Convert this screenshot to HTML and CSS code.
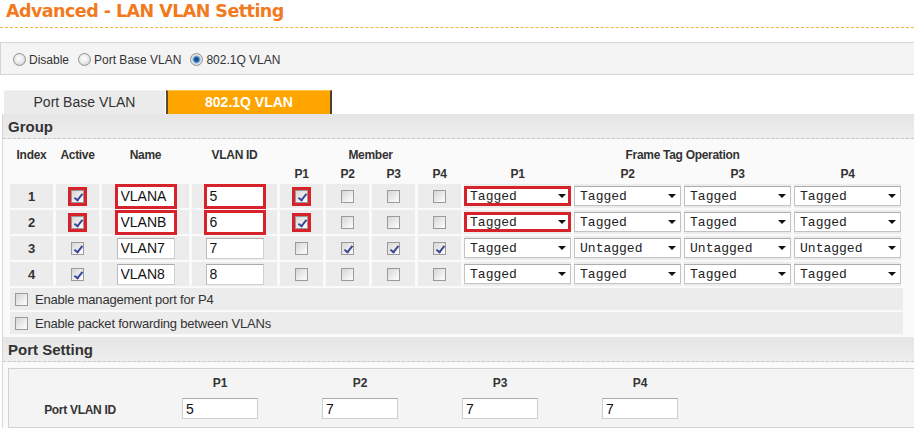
FILE: index.html
```html
<!DOCTYPE html>
<html>
<head>
<meta charset="utf-8">
<title>Advanced - LAN VLAN Setting</title>
<link rel="stylesheet" href="styles.css">
</head>
<body>
<div class="page">
  <h1 class="title">Advanced - LAN VLAN Setting</h1>

  <div class="mode-bar">
    <label class="radio-item"><input type="radio" class="rd" name="mode"><span>Disable</span></label>
    <label class="radio-item"><input type="radio" class="rd" name="mode"><span>Port Base VLAN</span></label>
    <label class="radio-item"><input type="radio" class="rd" name="mode" checked><span>802.1Q VLAN</span></label>
  </div>

  <div class="tabs">
    <div class="tab">Port Base VLAN</div>
    <div class="tab active">802.1Q VLAN</div>
  </div>

  <div class="panel">
    <div class="section-head">Group</div>
    <div class="group-body">
      <table class="grp">
        <colgroup>
          <col class="c-idx"><col class="c-act"><col class="c-name"><col class="c-vid">
          <col class="c-m"><col class="c-m"><col class="c-m"><col class="c-m">
          <col class="c-f"><col class="c-f"><col class="c-f"><col class="c-f">
        </colgroup>
        <thead>
          <tr class="h1">
            <th>Index</th><th>Active</th><th>Name</th><th>VLAN ID</th>
            <th colspan="4">Member</th>
            <th colspan="4">Frame Tag Operation</th>
          </tr>
          <tr class="h2">
            <th></th><th></th><th></th><th></th>
            <th>P1</th><th>P2</th><th>P3</th><th>P4</th>
            <th>P1</th><th>P2</th><th>P3</th><th>P4</th>
          </tr>
        </thead>
        <tbody>
          <tr>
            <td class="idx">1</td>
            <td><input type="checkbox" class="cb hl" checked></td>
            <td><input type="text" class="txt hl" value="VLANA"></td>
            <td><input type="text" class="txt hl" value="5"></td>
            <td><input type="checkbox" class="cb hl" checked></td>
            <td><input type="checkbox" class="cb"></td>
            <td><input type="checkbox" class="cb"></td>
            <td><input type="checkbox" class="cb"></td>
            <td><span class="sel hl"><select><option>Tagged</option><option>Untagged</option></select></span></td>
            <td><span class="sel"><select><option>Tagged</option><option>Untagged</option></select></span></td>
            <td><span class="sel"><select><option>Tagged</option><option>Untagged</option></select></span></td>
            <td><span class="sel"><select><option>Tagged</option><option>Untagged</option></select></span></td>
          </tr>
          <tr>
            <td class="idx">2</td>
            <td><input type="checkbox" class="cb hl" checked></td>
            <td><input type="text" class="txt hl" value="VLANB"></td>
            <td><input type="text" class="txt hl" value="6"></td>
            <td><input type="checkbox" class="cb hl" checked></td>
            <td><input type="checkbox" class="cb"></td>
            <td><input type="checkbox" class="cb"></td>
            <td><input type="checkbox" class="cb"></td>
            <td><span class="sel hl"><select><option>Tagged</option><option>Untagged</option></select></span></td>
            <td><span class="sel"><select><option>Tagged</option><option>Untagged</option></select></span></td>
            <td><span class="sel"><select><option>Tagged</option><option>Untagged</option></select></span></td>
            <td><span class="sel"><select><option>Tagged</option><option>Untagged</option></select></span></td>
          </tr>
          <tr>
            <td class="idx">3</td>
            <td><input type="checkbox" class="cb" checked></td>
            <td><input type="text" class="txt" value="VLAN7"></td>
            <td><input type="text" class="txt" value="7"></td>
            <td><input type="checkbox" class="cb"></td>
            <td><input type="checkbox" class="cb" checked></td>
            <td><input type="checkbox" class="cb" checked></td>
            <td><input type="checkbox" class="cb" checked></td>
            <td><span class="sel"><select><option>Tagged</option><option>Untagged</option></select></span></td>
            <td><span class="sel"><select><option>Untagged</option><option>Tagged</option></select></span></td>
            <td><span class="sel"><select><option>Untagged</option><option>Tagged</option></select></span></td>
            <td><span class="sel"><select><option>Untagged</option><option>Tagged</option></select></span></td>
          </tr>
          <tr>
            <td class="idx">4</td>
            <td><input type="checkbox" class="cb" checked></td>
            <td><input type="text" class="txt" value="VLAN8"></td>
            <td><input type="text" class="txt" value="8"></td>
            <td><input type="checkbox" class="cb"></td>
            <td><input type="checkbox" class="cb"></td>
            <td><input type="checkbox" class="cb"></td>
            <td><input type="checkbox" class="cb"></td>
            <td><span class="sel"><select><option>Tagged</option><option>Untagged</option></select></span></td>
            <td><span class="sel"><select><option>Tagged</option><option>Untagged</option></select></span></td>
            <td><span class="sel"><select><option>Tagged</option><option>Untagged</option></select></span></td>
            <td><span class="sel"><select><option>Tagged</option><option>Untagged</option></select></span></td>
          </tr>
        </tbody>
      </table>

      <label class="opt"><input type="checkbox" class="cb"><span>Enable management port for P4</span></label>
      <label class="opt"><input type="checkbox" class="cb"><span>Enable packet forwarding between VLANs</span></label>
    </div>

    <div class="section-head">Port Setting</div>
    <div class="port-box">
      <div class="port-grid">
        <div class="ph"></div>
        <div class="ph">P1</div>
        <div class="ph">P2</div>
        <div class="ph">P3</div>
        <div class="ph">P4</div>
        <div class="plabel">Port VLAN ID</div>
        <div class="pcell"><input type="text" class="ptxt" value="5"></div>
        <div class="pcell"><input type="text" class="ptxt" value="7"></div>
        <div class="pcell"><input type="text" class="ptxt" value="7"></div>
        <div class="pcell"><input type="text" class="ptxt" value="7"></div>
      </div>
    </div>
  </div>
</div>
</body>
</html>
```

FILE: styles.css
```css
html, body {
  margin: 0;
  padding: 0;
  background: #ffffff;
}

body {
  font-family: "Liberation Sans", Arial, sans-serif;
  font-size: 12px;
  color: #333333;
}

.page {
  width: 914px;
  height: 430px;
  overflow: hidden;
}

/* ---------- title ---------- */
.title {
  margin: 0;
  height: 27px;
  padding-left: 6px;
  font-family: "DejaVu Sans", Verdana, sans-serif;
  font-weight: bold;
  font-size: 17.5px;
  letter-spacing: -0.55px;
  line-height: 22px;
  color: #f27a1e;
  border-bottom: 1px dashed #f0b83a;
}

/* ---------- mode radios ---------- */
.mode-bar {
  margin-top: 14px;
  height: 29px;
  background: #f4f4f4;
  border-top: 1px solid #d4d4d4;
  border-bottom: 1px solid #d4d4d4;
  border-left: 1px solid #d4d4d4;
  display: flex;
  align-items: center;
  padding-left: 12px;
  padding-top: 2px;
  box-sizing: content-box;
}

.radio-item {
  display: flex;
  align-items: center;
  gap: 3px;
  margin-right: 9px;
  font-size: 12px;
  color: #333;
}

.rd {
  appearance: none;
  -webkit-appearance: none;
  margin: 0;
  width: 13px;
  height: 13px;
  border-radius: 50%;
  border: 1px solid #929292;
  background: radial-gradient(circle at 45% 40%, #ffffff 0, #f0f0f0 35%, #c9c9c9 100%);
  box-sizing: border-box;
}

.rd:checked {
  background: radial-gradient(circle at 50% 50%, #153d78 0, #1f5aa0 2px, #7fb2e0 3.5px, #e6e6e6 4.5px, #cfcfcf 100%);
}

/* ---------- tabs ---------- */
.tabs {
  margin-top: 15px;
  height: 24px;
  padding-left: 4px;
  display: flex;
}

.tab {
  width: 161px;
  height: 24px;
  background: #ebebeb;
  border-top: 1px solid #f3f3f3;
  box-sizing: border-box;
  font-size: 14px;
  line-height: 23px;
  text-align: center;
  color: #333;
}

.tab.active {
  width: 166px;
  margin-left: 1px;
  background: #ffa500;
  border-top: 1px solid #ffc54a;
  border-left: 2px solid #5a4a35;
  border-right: 2px solid #4a4038;
  color: #ffffff;
  font-weight: bold;
}

/* ---------- panel ---------- */
.panel {
  margin-left: 2px;
  border-left: 1px solid #d9d9d9;
  background: #fafafa;
}

.section-head {
  height: 24px;
  padding-left: 5px;
  background: linear-gradient(#e5e5e5, #eeeeee);
  border-bottom: 1px dashed #c8c8c8;
  font-weight: bold;
  font-size: 15px;
  line-height: 25px;
  color: #333;
}

.group-body {
  padding: 5px 0 1px 0;
}

/* ---------- group table ---------- */
.grp {
  table-layout: fixed;
  border-collapse: separate;
  border-spacing: 3px 2px;
  margin-left: 4px;
  width: 897px;
}

.c-idx { width: 43px; }
.c-act { width: 43px; }
.c-name { width: 87px; }
.c-vid { width: 85px; }
.c-m { width: 43px; }
.c-f { width: 107px; }

.grp th {
  font-weight: bold;
  font-size: 12px;
  letter-spacing: -0.3px;
  color: #333;
  text-align: center;
  padding: 0;
  height: 18px;
  vertical-align: middle;
}

.grp .h2 th {
  height: 16px;
}

.grp td {
  background: #ececec;
  height: 24px;
  padding: 0;
  text-align: center;
  vertical-align: middle;
}

.grp td.idx {
  font-weight: bold;
  font-size: 13px;
}

/* checkboxes */
.cb {
  appearance: none;
  -webkit-appearance: none;
  margin: 0;
  width: 13px;
  height: 13px;
  box-sizing: border-box;
  border: 1px solid #9a9a9a;
  background: linear-gradient(135deg, #d6d6d6 0%, #f2f2f2 70%, #fdfdfd 100%);
  position: relative;
  vertical-align: middle;
}

.cb:checked::after {
  content: "";
  position: absolute;
  left: 3.5px;
  top: 0.5px;
  width: 3px;
  height: 7px;
  border: solid #3a4898;
  border-width: 0 2px 2px 0;
  transform: rotate(38deg);
}

.cb.hl {
  box-shadow: 0 0 0 3px #d6222b;
}

/* text inputs */
.txt {
  width: 58px;
  height: 21px;
  box-sizing: border-box;
  margin: 0;
  padding: 0 3px;
  border: 1px solid #cfcfcf;
  border-top-color: #ababab;
  border-left-color: #bdbdbd;
  background: #ffffff;
  font-family: "Liberation Sans", Arial, sans-serif;
  font-size: 14px;
  color: #111;
  vertical-align: middle;
}

.txt.hl {
  border-color: #d6222b;
  box-shadow: 0 0 0 2px #d6222b;
}

/* selects */
.sel {
  position: relative;
  display: block;
  width: 107px;
  height: 20px;
  margin: 0 auto;
}

.sel select {
  appearance: none;
  -webkit-appearance: none;
  display: block;
  width: 107px;
  height: 20px;
  margin: 0;
  padding: 0 0 0 5px;
  box-sizing: border-box;
  border: 1px solid #c3c3c3;
  border-top-color: #adadad;
  border-radius: 0;
  background: #ffffff;
  font-family: "Liberation Mono", "Courier New", monospace;
  font-size: 13px;
  color: #222;
}

.sel::after {
  content: "";
  position: absolute;
  right: 5px;
  top: 8px;
  border-left: 4px solid transparent;
  border-right: 4px solid transparent;
  border-top: 4px solid #111;
  pointer-events: none;
}

.sel.hl select {
  border: 3px solid #d6222b;
  padding-left: 3px;
}

/* option rows */
.opt {
  display: flex;
  align-items: center;
  gap: 7px;
  width: 893px;
  height: 22px;
  margin: 0 0 2px 7px;
  padding-left: 5px;
  box-sizing: border-box;
  background: #ececec;
  font-size: 13px;
  letter-spacing: -0.2px;
  color: #333;
}

/* ---------- port setting ---------- */
.port-box {
  margin: 6px 0 0 5px;
  border: 1px solid #d2d2d2;
  border-right: none;
  background: #f4f4f4;
  height: 58px;
}

.port-grid {
  display: grid;
  grid-template-columns: repeat(5, 140px);
  grid-template-rows: 16px 21px;
  row-gap: 7px;
  padding: 6px 0 0 1px;
}

.ph {
  font-weight: bold;
  font-size: 12px;
  text-align: center;
  line-height: 16px;
  color: #333;
}

.plabel {
  font-weight: bold;
  font-size: 12px;
  letter-spacing: -0.3px;
  text-align: center;
  line-height: 21px;
  padding-top: 2px;
  color: #333;
}

.pcell {
  display: flex;
  justify-content: center;
}

.ptxt {
  width: 76px;
  height: 21px;
  box-sizing: border-box;
  margin: 0;
  padding: 0 3px;
  border: 1px solid #cfcfcf;
  border-top-color: #ababab;
  background: #ffffff;
  font-family: "Liberation Sans", Arial, sans-serif;
  font-size: 14px;
  color: #111;
}
```
